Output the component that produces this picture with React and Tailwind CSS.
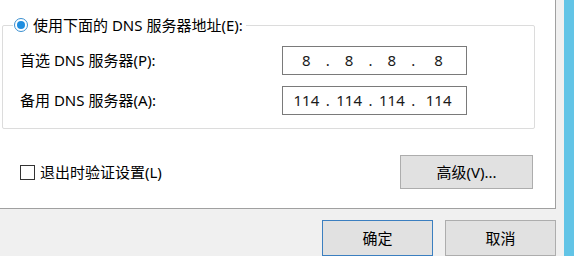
const font = { fontFamily: '"Noto Sans", "Noto Sans CJK SC", sans-serif' };

function IpBox({ parts }) {
  return (
    <div className="flex items-center w-[185px] h-[29px] border border-[#7a7a7a] bg-white px-[6px] text-[15px] text-[#1a1a1a]">
      {parts.map((p, i) => (
        <div key={i} className="flex items-center flex-1">
          <span className="flex-1 text-center">{p}</span>
          {i < parts.length - 1 && <span className="w-[8px] text-center">.</span>}
        </div>
      ))}
    </div>
  );
}

export default function App() {
  return (
    <div className="flex w-[574px] h-[256px] overflow-hidden bg-[#f0f0f0] text-black" style={font}>
      <div className="flex flex-col w-[564px]">
        <div className="w-[556px] h-[211px] bg-white border-r border-b border-[#a0a0a0] pt-[25px] pl-[2px]">
          <div className="relative w-[533px] h-[104px] border border-[#dcdcdc] rounded-[2px] pt-[20px] pl-[17px]">
            <div className="absolute left-[10px] top-[-12px] flex items-center gap-[5px] bg-white pl-[1px] pr-[3px] text-[15px] leading-[22px]">
              <span className="flex items-center justify-center w-[14px] h-[14px] rounded-full border border-[#3a8fd0] bg-white">
                <span className="w-[8px] h-[8px] rounded-full bg-[#1f8ee0]" />
              </span>
              <span>使用下面的 DNS 服务器地址(E):</span>
            </div>
            <div className="flex items-center justify-between w-[447px] text-[15px]">
              <span>首选 DNS 服务器(P):</span>
              <IpBox parts={["8", "8", "8", "8"]} />
            </div>
            <div className="flex items-center justify-between w-[447px] mt-[11px] text-[15px]">
              <span>备用 DNS 服务器(A):</span>
              <IpBox parts={["114", "114", "114", "114"]} />
            </div>
          </div>
          <div className="flex items-center justify-between w-[531px] mt-[26px] pl-[18px]">
            <div className="flex items-center gap-[5px] text-[15px]">
              <span className="w-[15px] h-[15px] border border-[#333333] bg-white" />
              <span>退出时验证设置(L)</span>
            </div>
            <button className="w-[133px] h-[34px] bg-[#e1e1e1] border border-[#adadad] text-[15px]">
              高级(V)...
            </button>
          </div>
        </div>
        <div className="flex gap-[12px] pl-[322px] pt-[11px]">
          <button className="w-[111px] h-[36px] bg-[#e1e1e1] border border-[#3b7fc0] text-[15px]">确定</button>
          <button className="w-[111px] h-[36px] bg-[#e1e1e1] border border-[#adadad] text-[15px]">取消</button>
        </div>
      </div>
      <div className="w-[10px] h-full bg-[#62c4e6]" />
    </div>
  );
}
